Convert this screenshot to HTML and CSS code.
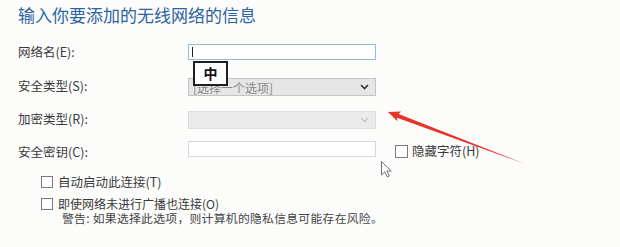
FILE: index.html
```html
<!DOCTYPE html>
<html lang="zh-CN">
  <head>
    <meta charset="UTF-8" />
    <title>手动连接到无线网络</title>
    <link rel="stylesheet" href="styles.css">
  </head>
  <body>
    <div class="dialog">
      <h1 class="title">输入你要添加的无线网络的信息</h1>

      <div class="form">
        <div class="row row-name">
          <label class="label">网络名(E):</label>
          <div class="field input focused"><span class="caret"></span></div>
        </div>
        <div class="row row-type">
          <label class="label">安全类型(S):</label>
          <div class="field select">
            <span class="select-text">[选择一个选项]</span>
            <svg class="chevron" width="9" height="6" viewBox="0 0 9 6"><path d="M1 1 L4.5 4.5 L8 1" fill="none" stroke="#333" stroke-width="1.6"/></svg>
          </div>
        </div>
        <div class="row row-enc">
          <label class="label">加密类型(R):</label>
          <div class="field select disabled">
            <span class="select-text"></span>
            <svg class="chevron" width="9" height="6" viewBox="0 0 9 6"><path d="M1 1 L4.5 4.5 L8 1" fill="none" stroke="#c2c2c2" stroke-width="1.3"/></svg>
          </div>
        </div>
        <div class="row row-key">
          <label class="label">安全密钥(C):</label>
          <div class="field input"></div>
          <div class="check hide-chars"><span class="box"></span><span>隐藏字符(H)</span></div>
        </div>
      </div>

      <div class="options">
        <div class="check opt-auto"><span class="box"></span><span>自动启动此连接(T)</span></div>
        <div class="check opt-hidden"><span class="box"></span><span>即使网络未进行广播也连接(O)</span></div>
        <p class="warning">警告: 如果选择此选项，则计算机的隐私信息可能存在风险。</p>
      </div>
    </div>

    <!-- 输入法提示 -->
    <div class="ime">中</div>

    <!-- 红色箭头和鼠标 -->
    <svg class="overlay" width="620" height="247" viewBox="0 0 620 247">
      <polygon points="388,112 401,111.4 398.6,114 525,164 397,117.8 397.4,121.2" fill="#e8332b"/>
      <path d="M381.5 161.5 L381.5 175 L384.8 171.8 L387.3 177 L389.3 176 L386.9 171 L391.3 171 Z" fill="#fff" stroke="#707070" stroke-width="1"/>
    </svg>
  </body>
</html>
```

FILE: styles.css
```css
body {
  margin: 0;
  background-color: #fcfcfb;
  font-family: "Noto Sans CJK SC", "Noto Sans", sans-serif;
  color: #3a3a3a;
  width: 620px;
  height: 247px;
  overflow: hidden;
}
.dialog {
  padding: 4px 0 0 18px;
}
.title {
  margin: 0;
  font-size: 17px;
  font-weight: normal;
  line-height: 22px;
  color: #2d64a3;
}
.form {
  margin-top: 18px;
}
.row {
  display: flex;
  align-items: center;
}
.label {
  width: 170px;
  font-size: 12.5px;
  line-height: 14px;
}
.row-name {
  height: 16px;
}
.row-type {
  height: 18px;
  margin-top: 18px;
}
.row-enc {
  height: 18px;
  margin-top: 15px;
}
.row-key {
  height: 16px;
  margin-top: 12px;
}
.row-type .label {
  margin-top: -2px;
}
.row-enc .label {
  margin-top: -3px;
}
.row-key .label {
  margin-top: 6px;
}
.field {
  box-sizing: border-box;
  width: 188px;
  height: 100%;
  border: 1px solid #d6d6d6;
  background-color: #fff;
}
.focused {
  border-color: #94bbe2;
  padding: 2px 0 0 3px;
}
.caret {
  display: block;
  width: 1px;
  height: 10px;
  background-color: #222;
}
.select {
  display: flex;
  align-items: center;
  justify-content: space-between;
  padding: 0 6px 0 4px;
  background-color: #e6e6e6;
  border-color: #c4c4c4;
}
.select.disabled {
  background-color: #ebebeb;
  border-color: #dedede;
}
.select-text {
  font-size: 12px;
  color: #8a8a8a;
}
.check {
  display: flex;
  align-items: center;
  gap: 5px;
  font-size: 12.5px;
  line-height: 14px;
}
.box {
  box-sizing: border-box;
  width: 12px;
  height: 12px;
  border: 1px solid #7a7a7a;
  background-color: #fff;
}
.hide-chars {
  margin: 4px 0 0 19px;
  gap: 4px;
}
.hide-chars .box {
  width: 13px;
  height: 13px;
}
.options {
  padding-left: 23px;
}
.opt-auto {
  height: 16px;
  margin-top: 17px;
}
.opt-hidden {
  height: 12px;
  margin-top: 8px;
  font-size: 12px;
  line-height: 12px;
}
.warning {
  margin: 2px 0 0;
  padding-left: 21px;
  font-size: 11.8px;
  line-height: 12px;
  letter-spacing: 0.3px;
  color: #444;
}
.ime {
  position: absolute;
  left: 193px;
  top: 61px;
  box-sizing: border-box;
  width: 35px;
  height: 25px;
  border: 2px solid #1e1e1e;
  background-color: #fff;
  font-size: 14px;
  font-weight: bold;
  line-height: 21px;
  text-align: center;
  color: #111;
}
.overlay {
  position: absolute;
  left: 0;
  top: 0;
}
```
